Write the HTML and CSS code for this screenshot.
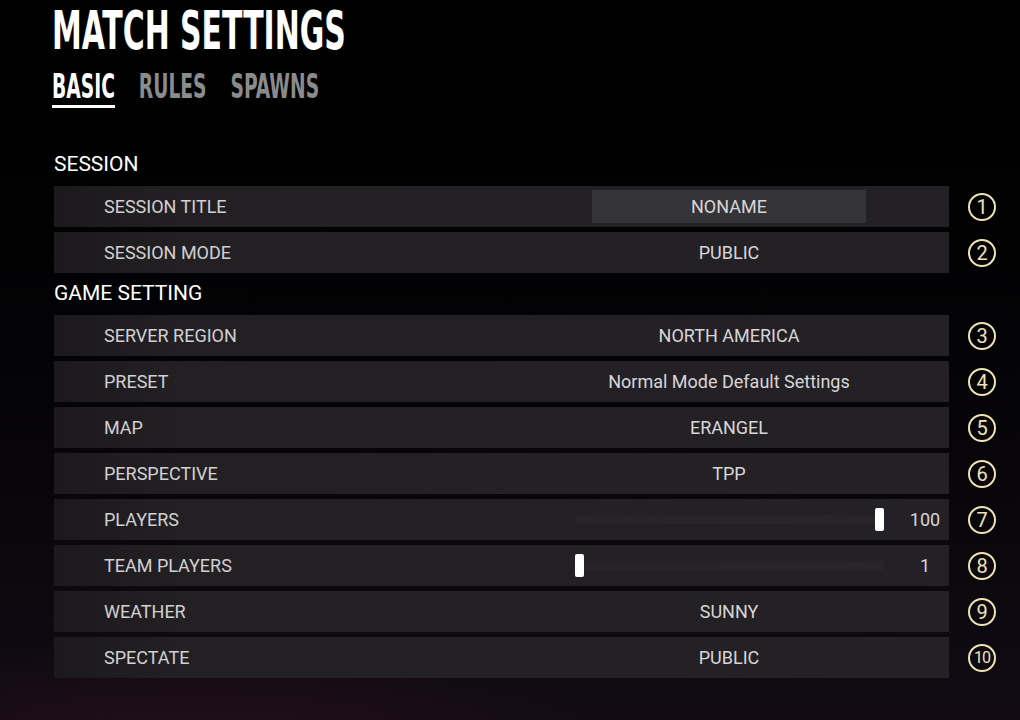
FILE: index.html
```html
<!DOCTYPE html>
<html>
<head>
<meta charset="utf-8">
<link rel="stylesheet" href="styles.css">
</head>
<body>
<div class="page">
  <h1 class="title">MATCH SETTINGS</h1>
  <div class="tabs-wrap">
    <nav class="tabs">
      <span class="tab active">BASIC</span>
      <span class="tab">RULES</span>
      <span class="tab">SPAWNS</span>
    </nav>
  </div>

  <h2 class="section">SESSION</h2>
  <div class="list">
    <div class="item">
      <div class="row"><span class="label">SESSION TITLE</span><span class="value"><span class="input">NONAME</span></span></div>
      <span class="num">1</span>
    </div>
    <div class="item">
      <div class="row"><span class="label">SESSION MODE</span><span class="value">PUBLIC</span></div>
      <span class="num">2</span>
    </div>
  </div>

  <h2 class="section">GAME SETTING</h2>
  <div class="list">
    <div class="item">
      <div class="row"><span class="label">SERVER REGION</span><span class="value">NORTH AMERICA</span></div>
      <span class="num">3</span>
    </div>
    <div class="item">
      <div class="row"><span class="label">PRESET</span><span class="value">Normal Mode Default Settings</span></div>
      <span class="num">4</span>
    </div>
    <div class="item">
      <div class="row"><span class="label">MAP</span><span class="value">ERANGEL</span></div>
      <span class="num">5</span>
    </div>
    <div class="item">
      <div class="row"><span class="label">PERSPECTIVE</span><span class="value">TPP</span></div>
      <span class="num">6</span>
    </div>
    <div class="item">
      <div class="row"><span class="label">PLAYERS</span>
        <span class="slider"><span class="track"><span class="thumb max"></span></span><span class="sval">100</span></span>
      </div>
      <span class="num">7</span>
    </div>
    <div class="item">
      <div class="row"><span class="label">TEAM PLAYERS</span>
        <span class="slider"><span class="track"><span class="thumb min"></span></span><span class="sval">1</span></span>
      </div>
      <span class="num">8</span>
    </div>
    <div class="item">
      <div class="row"><span class="label">WEATHER</span><span class="value">SUNNY</span></div>
      <span class="num">9</span>
    </div>
    <div class="item">
      <div class="row"><span class="label">SPECTATE</span><span class="value">PUBLIC</span></div>
      <span class="num ten">10</span>
    </div>
  </div>
</div>
</body>
</html>
```

FILE: styles.css
```css
html, body {
  margin: 0;
  height: 100%;
}
body {
  width: 1020px;
  height: 720px;
  overflow: hidden;
  background:
    radial-gradient(ellipse 420px 90px at 200px 730px, rgba(60, 20, 45, 0.35), rgba(0,0,0,0) 100%),
    linear-gradient(180deg, #000000 0%, #030204 45%, #0b080e 80%, #120b14 100%);
  font-family: Roboto, "Noto Sans", sans-serif;
  color: #d6d4d6;
}
.page {
  padding: 0 0 0 52px;
}
.title {
  margin: 0;
  padding-top: 4px;
  height: 54px;
  font-family: "DejaVu Sans Condensed", "DejaVu Sans", sans-serif;
  font-weight: 700;
  font-size: 53px;
  line-height: 54px;
  color: #ffffff;
  transform: scaleX(0.627);
  transform-origin: left center;
  white-space: nowrap;
}
.tabs-wrap {
  height: 91px;
  padding-top: 11px;
  box-sizing: border-box;
}
.tabs {
  display: flex;
  align-items: flex-start;
  gap: 38px;
  transform: scaleX(0.63);
  transform-origin: left top;
}
.tab {
  font-family: "DejaVu Sans Condensed", "DejaVu Sans", sans-serif;
  font-weight: 700;
  font-size: 33px;
  line-height: 36px;
  color: #8b8b8b;
  white-space: nowrap;
}
.tab.active {
  color: #ffffff;
  border-bottom: 3px solid #ffffff;
}
.section {
  margin: 0 0 7px 0;
  font-weight: 400;
  font-size: 21px;
  line-height: 30px;
  color: #ffffff;
  padding-left: 2px;
}
.list {
  display: flex;
  flex-direction: column;
  gap: 5px;
  margin-bottom: 5px;
}
.item {
  display: flex;
  align-items: center;
  gap: 19px;
  margin-left: 2px;
}
.row {
  width: 895px;
  height: 41px;
  display: flex;
  align-items: center;
  background: linear-gradient(90deg, #1c191d 0%, #232024 14%, #232125 100%);
}
.label {
  box-sizing: border-box;
  width: 455px;
  padding-left: 50px;
  font-size: 18px;
  color: #d2d0d2;
  white-space: nowrap;
  flex: none;
}
.value {
  flex: 1;
  font-size: 18px;
  color: #d8d6d8;
  display: flex;
  justify-content: center;
  white-space: nowrap;
}
.input {
  display: block;
  width: 274px;
  height: 33px;
  line-height: 33px;
  background: #353437;
  text-align: center;
}
.slider {
  flex: 1;
  display: flex;
  align-items: center;
  padding-left: 66px;
}
.track {
  position: relative;
  width: 309px;
  height: 23px;
  background: linear-gradient(180deg, rgba(0,0,0,0) 30%, rgba(255,255,255,0.018) 30%, rgba(255,255,255,0.018) 70%, rgba(0,0,0,0) 70%);
}
.thumb {
  position: absolute;
  top: 0;
  width: 9px;
  height: 23px;
  background: #ffffff;
  border-radius: 2px;
}
.thumb.max { right: 0; }
.thumb.min { left: 0; }
.sval {
  margin-left: 16px;
  width: 50px;
  text-align: center;
  font-size: 18px;
  color: #d8d6d8;
}
.num {
  width: 24px;
  height: 24px;
  border: 2px solid #eee3b3;
  border-radius: 50%;
  color: #eee3b3;
  font-size: 20px;
  line-height: 24px;
  text-align: center;
  flex: none;
}
.num.ten {
  font-size: 16px;
  letter-spacing: -1px;
}
```
